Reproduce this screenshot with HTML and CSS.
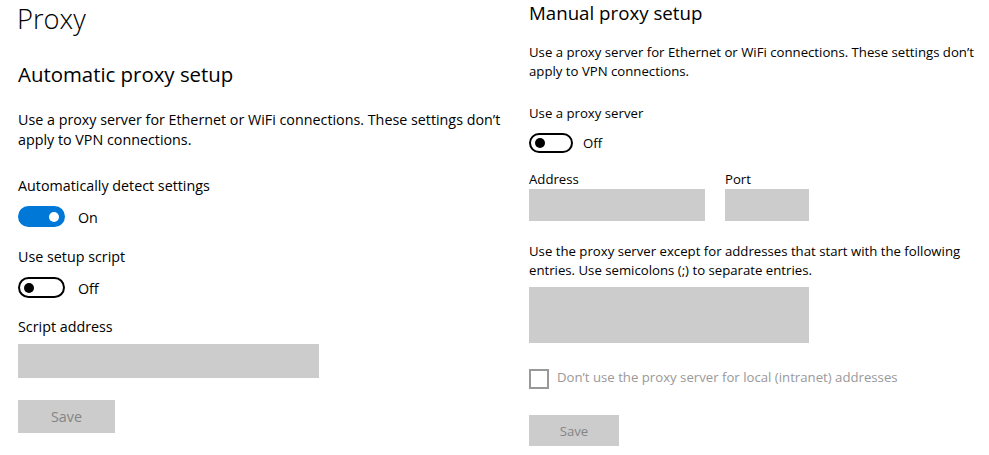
FILE: index.html
```html
<!DOCTYPE html>
<html lang="en">
<head>
<meta charset="utf-8">
<title>Proxy</title>
<link rel="stylesheet" href="styles.css">
</head>
<body>
<div class="page">
  <section class="col col-auto">
    <h1 class="title">Proxy</h1>
    <h2 class="subtitle">Automatic proxy setup</h2>
    <p class="desc">Use a proxy server for Ethernet or WiFi connections. These settings don’t apply to VPN connections.</p>

    <div class="label label-first">Automatically detect settings</div>
    <div class="toggle-row">
      <span class="toggle on"><span class="knob"></span></span>
      <span class="state">On</span>
    </div>

    <div class="label label-next">Use setup script</div>
    <div class="toggle-row">
      <span class="toggle"><span class="knob"></span></span>
      <span class="state">Off</span>
    </div>

    <div class="label label-script">Script address</div>
    <div class="input script-input"></div>

    <button class="btn btn-auto" type="button">Save</button>
  </section>

  <section class="col col-manual">
    <h2 class="subtitle subtitle-manual">Manual proxy setup</h2>
    <p class="desc desc-manual">Use a proxy server for Ethernet or WiFi connections. These settings don’t apply to VPN connections.</p>

    <div class="label label-proxy">Use a proxy server</div>
    <div class="toggle-row toggle-row-manual">
      <span class="toggle"><span class="knob"></span></span>
      <span class="state">Off</span>
    </div>

    <div class="addr-row">
      <div class="addr-field">
        <div class="label">Address</div>
        <div class="input addr-input"></div>
      </div>
      <div class="addr-field">
        <div class="label">Port</div>
        <div class="input port-input"></div>
      </div>
    </div>

    <p class="desc desc-except">Use the proxy server except for addresses that start with the following entries. Use semicolons (;) to separate entries.</p>
    <div class="input except-input"></div>

    <label class="check-row">
      <span class="checkbox"></span>
      <span class="check-label">Don’t use the proxy server for local (intranet) addresses</span>
    </label>

    <button class="btn btn-manual" type="button">Save</button>
  </section>
</div>
</body>
</html>
```

FILE: styles.css
```css
* { box-sizing: border-box; }

html, body {
  margin: 0;
  padding: 0;
  background: #ffffff;
}

body {
  font-family: "Open Sans", "Noto Sans", "Liberation Sans", sans-serif;
  font-size: 14.3px;
  color: #000000;
  width: 989px;
  height: 455px;
  overflow: hidden;
}

.page {
  display: flex;
}

.col {
  display: flex;
  flex-direction: column;
  align-items: flex-start;
}

.col-auto {
  width: 529px;
  padding-left: 18px;
}

.col-manual {
  flex: 1;
  font-size: 13.2px;
}

.title {
  margin: 0;
  font-size: 27.3px;
  font-weight: 300;
  line-height: 38px;
  margin-left: -1px;
}

.subtitle {
  margin: 22px 0 0;
  font-size: 20.4px;
  font-weight: 400;
  line-height: 28px;
}

.subtitle-manual {
  margin-top: 0;
  font-size: 18.7px;
  line-height: 26px;
}

.desc {
  margin: 22px 0 0;
  line-height: 20px;
  width: 495px;
}

.desc-manual {
  margin-top: 17px;
  line-height: 19px;
  width: 455px;
}

.label {
  line-height: 20px;
}

.col-manual .label {
  line-height: 19px;
}

.label-first { margin-top: 26px; }
.label-next { margin-top: 20px; }
.label-script { margin-top: 19px; }
.label-proxy { margin-top: 23px; }

.toggle-row {
  display: flex;
  align-items: center;
  gap: 13px;
  margin-top: 10px;
  height: 21px;
}

.toggle-row-manual {
  margin-top: 10px;
  height: 20px;
  gap: 10px;
}

.toggle {
  width: 47px;
  height: 21px;
  border-radius: 11px;
  border: 2px solid #000000;
  display: flex;
  align-items: center;
  padding: 0 4px;
}

.toggle-row-manual .toggle {
  width: 44px;
  height: 20px;
  border-radius: 10px;
}

.toggle .knob {
  width: 10px;
  height: 10px;
  border-radius: 50%;
  background: #000000;
}

.toggle.on {
  background: #0078d7;
  border-color: #0078d7;
  justify-content: flex-end;
}

.toggle.on .knob {
  background: #ffffff;
}

.state {
  line-height: 20px;
  padding-top: 2px;
}

.toggle-row-manual .state {
  padding-top: 0;
}

.input {
  background: #cccccc;
}

.script-input {
  margin-top: 7px;
  width: 301px;
  height: 34px;
}

.btn {
  border: none;
  background: #cccccc;
  color: #858585;
  font-family: inherit;
  font-size: inherit;
  padding: 0;
}

.btn-auto {
  margin-top: 22px;
  width: 97px;
  height: 33px;
}

.addr-row {
  display: flex;
  gap: 20px;
  margin-top: 17px;
}

.addr-input {
  width: 176px;
  height: 32px;
}

.port-input {
  width: 84px;
  height: 32px;
}

.desc-except {
  margin-top: 21px;
  line-height: 19px;
  width: 450px;
}

.except-input {
  margin-top: 7px;
  width: 280px;
  height: 56px;
}

.check-row {
  display: flex;
  align-items: center;
  gap: 8px;
  margin-top: 26px;
}

.checkbox {
  width: 20px;
  height: 20px;
  border: 2px solid #999999;
}

.check-label {
  color: #999999;
  line-height: 19px;
  margin-top: -4px;
}

.btn-manual {
  margin-top: 26px;
  width: 90px;
  height: 31px;
}
```
